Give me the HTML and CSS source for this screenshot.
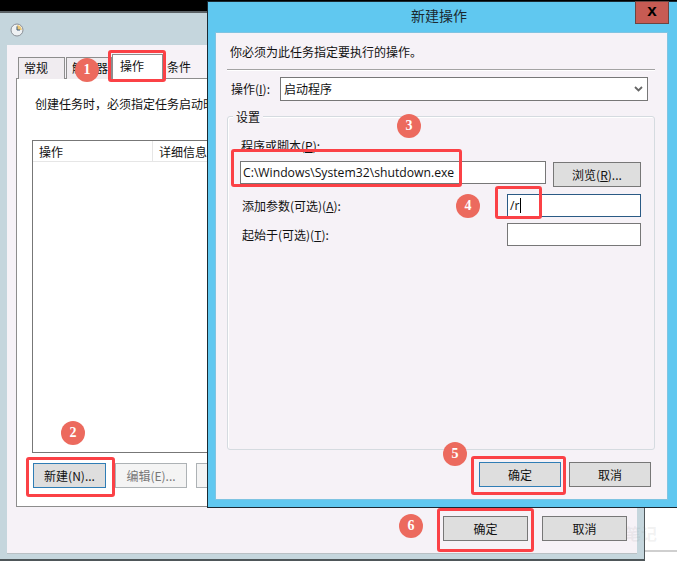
FILE: index.html
```html
<!DOCTYPE html>
<html lang="zh">
<head>
<meta charset="utf-8">
<title>新建操作</title>
<link rel="stylesheet" href="styles.css">
</head>
<body>
<div class="desk">
  <div class="rule"></div>
  <section class="win back">
    <div class="back-title">
      <svg class="clock" width="14" height="14" viewBox="0 0 14 14"><circle cx="7" cy="7" r="6" fill="#eef1f3" stroke="#8a8f96"/><path d="M7 7V2.2A4.8 4.8 0 0 1 11.8 7Z" fill="#ecc878"/><path d="M7 3.4V7H10" fill="none" stroke="#3c5a78" stroke-width="1"/></svg>
    </div>
    <div class="panel back-panel">
      <div class="tabs">
        <span class="tab t1">常规</span>
        <span class="tab t2">触发器</span>
        <span class="tab active">操作</span>
        <span class="tab t4">条件</span>
      </div>
      <div class="tab-body">
        <p class="hint">创建任务时，必须指定任务启动时发生的操作。</p>
        <div class="list">
          <div class="list-head"><span class="col-a">操作</span><span class="col-b">详细信息</span></div>
        </div>
        <div class="list-btns">
          <button class="btn new">新建(N)...</button>
          <button class="btn off edit">编辑(E)...</button>
          <button class="btn off del">删除(D)</button>
        </div>
      </div>
      <div class="back-foot">
        <button class="btn big">确定</button>
        <button class="btn big">取消</button>
      </div>
    </div>
  </section>

  <section class="win front">
    <header class="front-title">新建操作<span class="close">x</span></header>
    <div class="panel front-panel">
      <p class="intro">你必须为此任务指定要执行的操作。</p>
      <div class="sep"></div>
      <div class="action-row">
        <label class="action-label">操作(<u>I</u>):</label>
        <div class="combo"><span>启动程序</span>
          <svg width="9" height="6" viewBox="0 0 9 6"><path d="M1 1l3.5 3.5L8 1" fill="none" stroke="#666" stroke-width="1.8"/></svg>
        </div>
      </div>
      <div class="group">
        <span class="legend">设置</span>
        <div class="field-label">程序或脚本(<u>P</u>):</div>
        <div class="prog-row">
          <div class="input prog">C:\Windows\System32\shutdown.exe</div>
          <button class="btn browse">浏览(<u>R</u>)...</button>
        </div>
        <div class="arg-row arg1">
          <span>添加参数(可选)(<u>A</u>):</span>
          <div class="input small focus">/r<i class="caret"></i></div>
        </div>
        <div class="arg-row arg2">
          <span>起始于(可选)(<u>T</u>):</span>
          <div class="input small"></div>
        </div>
      </div>
      <div class="front-foot">
        <button class="btn mid default">确定</button>
        <button class="btn mid">取消</button>
      </div>
    </div>
  </section>

  <div class="mark m-tab"></div>
  <div class="mark m-new"></div>
  <div class="mark m-prog"></div>
  <div class="mark m-arg"></div>
  <div class="mark m-ok"></div>
  <div class="mark m-backok"></div>

  <span class="dot d1">1</span>
  <span class="dot d2">2</span>
  <span class="dot d3">3</span>
  <span class="dot d4">4</span>
  <span class="dot d5">5</span>
  <span class="dot d6">6</span>

  <span class="watermark">笔记</span>
</div>
</body>
</html>
```
FILE: styles.css
```css
* { box-sizing: border-box; }
html, body { margin: 0; padding: 0; background: #fff; }
.desk {
  position: relative;
  width: 677px;
  height: 561px;
  overflow: hidden;
  font: 12px/18px "Noto Sans CJK SC", "Open Sans", sans-serif;
  color: #111;
  background: #fff;
}
.desk::before {
  content: "";
  position: absolute;
  left: 0; top: 0; right: 0;
  height: 11px;
  background: #000;
}
.rule { position: absolute; left: 645px; top: 550px; width: 32px; height: 2px; background: #cfcfcf; }
p { margin: 0; }
u { text-underline-offset: 1px; }
.win { position: absolute; display: flex; flex-direction: column; }
.panel { background: #f6f2f7; }

/* back window */
.back {
  left: 0; top: 11px;
  width: 645px; height: 550px;
  background: #c5d6dd;
  border-top: 2px solid #5a6165;
  border-right: 1px solid #4e5659;
  border-bottom: 2px solid #4e5659;
}
.back-title { height: 32px; flex: none; padding: 10px 0 0 10px; }
.clock { display: block; }
.back-panel {
  flex: 1;
  margin: 0 7px 6px 7px;
  padding: 10px 8px 0 9px;
  display: flex;
  flex-direction: column;
  box-shadow: 0 1px 0 #b9c0c4;
}
.tabs { display: flex; height: 24px; align-items: flex-end; padding-left: 2px; margin-bottom: -1px; }
.tab {
  position: relative;
  height: 22px;
  border: 1px solid #8d8d8d;
  border-bottom: 0;
  background: #f0ecf0;
  padding-left: 5px;
  line-height: 20px;
  flex: none;
}
.t1 { width: 47px; }
.t2 { width: 46px; margin-left: 1px; padding-left: 5px; }
.active { width: 51px; height: 25px; background: #fff; padding-left: 7px; margin-left: 0; line-height: 22px; }
.t4 { width: 60px; margin-left: 1px; padding-left: 3px; border: 0; background: transparent; }
.tab-body {
  height: 429px;
  flex: none;
  background: #fff;
  border: 1px solid #8d8d8d;
  padding: 16px 15px 0 15px;
  display: flex;
  flex-direction: column;
}
.hint { padding-left: 3px; }
.list { height: 313px; margin-top: 27px; border: 1px solid #777; background: #fff; flex: none; }
.list-head { height: 21px; display: flex; border-bottom: 1px solid #e6e6e6; line-height: 21px; }
.col-a { width: 120px; padding-left: 6px; border-right: 1px solid #e6e6e6; }
.col-b { padding-left: 6px; }
.list-btns { display: flex; margin-top: 10px; padding-left: 1px; gap: 9px; }
.btn {
  font: inherit;
  color: #111;
  padding: 0;
  background: #dedede;
  border: 1px solid #777;
  border-radius: 0;
  text-align: center;
  flex: none;
}
.new { width: 73px; height: 25px; border-color: #2f7db5; }
.off { width: 72px; height: 25px; background: #f4f4f4; border-color: #adb2b5; color: #777; }
.back-foot { display: flex; justify-content: flex-end; gap: 14px; padding: 9px 2px 0 0; }
.big { width: 85px; height: 25px; }

/* front window */
.front {
  left: 207px; top: 1px;
  width: 470px; height: 507px;
  background: #60c8f0;
  border: 1px solid #1a2a33;
  border-right: 0;
}
.front-title { height: 30px; flex: none; text-align: center; font-size: 14px; line-height: 27px; position: relative; color: #1b2a30; padding-right: 7px; }
.close {
  position: absolute;
  top: -1px; left: 427px;
  width: 34px; height: 23px;
  background: #c75b53;
  border: 1px solid #6d4440;
  color: #000;
  font: bold 17px/17px "Liberation Sans", sans-serif;
  text-align: center;
}
.front-panel {
  flex: 1;
  margin: 0 9px 7px 7px;
  padding: 11px 13px 0 12px;
  display: flex;
  flex-direction: column;
  box-shadow: 0 0 0 1px #7fc4e2 inset;
}
.intro { padding-left: 3px; }
.sep { height: 2px; margin-top: 8px; background: #a3a3a3; border-bottom: 1px solid #fff; }
.action-row { display: flex; align-items: center; margin-top: 6px; }
.action-label { width: 53px; padding-left: 4px; flex: none; }
.combo {
  width: 368px; height: 24px;
  background: #fff;
  border: 1px solid #777;
  display: flex;
  align-items: center;
  justify-content: space-between;
  padding: 0 4px 0 3px;
  line-height: 20px;
}
.group {
  position: relative;
  flex: 1;
  margin-top: 15px;
  padding: 20px 13px 0 12px;
  border: 1px solid #d5dbe0;
  border-radius: 3px;
  box-shadow: 1px 1px 0 #fff inset;
}
.legend { position: absolute; left: 5px; top: -9px; padding: 0 3px; background: #f6f2f7; }
.field-label { padding-left: 1px; }
.prog-row { display: flex; gap: 7px; margin-top: 6px; height: 25px; }
.input { background: #fff; border: 1px solid #777; }
.prog { width: 307px; height: 23px; padding-left: 2px; line-height: 21px; font-size: 12.2px; font-family: "Open Sans", sans-serif; white-space: nowrap; }
.browse { width: 88px; height: 25px; margin-top: 1px; }
.arg-row { display: flex; justify-content: space-between; align-items: center; padding-left: 2px; }
.arg1 { margin-top: 8px; }
.arg2 { margin-top: 6px; }
.small { width: 134px; height: 23px; padding-left: 2px; line-height: 21px; font-size: 12.2px; font-family: "Open Sans", sans-serif; display: flex; align-items: center; }
.focus { border-color: #2a5a85; }
.caret { display: inline-block; width: 1px; height: 15px; background: #000; margin-left: 1px; }
.front-foot { display: flex; justify-content: flex-end; gap: 8px; padding: 12px 4px 13px 0; }
.mid { width: 82px; height: 25px; }
.default { border-color: #2f7db5; }

/* annotations */
.mark { position: absolute; border: 3px solid #fb4146; border-radius: 3px; }
.m-tab { left: 108px; top: 50px; width: 58px; height: 32px; }
.m-new { left: 26px; top: 457px; width: 89px; height: 40px; }
.m-prog { left: 231px; top: 149px; width: 231px; height: 38px; }
.m-arg { left: 495px; top: 186px; width: 47px; height: 33px; }
.m-ok { left: 471px; top: 456px; width: 95px; height: 39px; }
.m-backok { left: 437px; top: 508px; width: 97px; height: 44px; }
.dot {
  position: absolute;
  width: 24px; height: 24px;
  border-radius: 50%;
  background: #ec6a5e;
  color: #fff;
  font: bold 14px/24px "Liberation Serif", serif;
  text-align: center;
}
.d1 { left: 75px; top: 58px; }
.d2 { left: 61px; top: 421px; }
.d3 { left: 397px; top: 114px; }
.d4 { left: 456px; top: 194px; }
.d5 { left: 443px; top: 442px; }
.d6 { left: 399px; top: 514px; }
.watermark { position: absolute; left: 625px; top: 522px; font-size: 16px; line-height: 22px; font-weight: 700; color: rgba(120, 120, 120, 0.1); }
```
